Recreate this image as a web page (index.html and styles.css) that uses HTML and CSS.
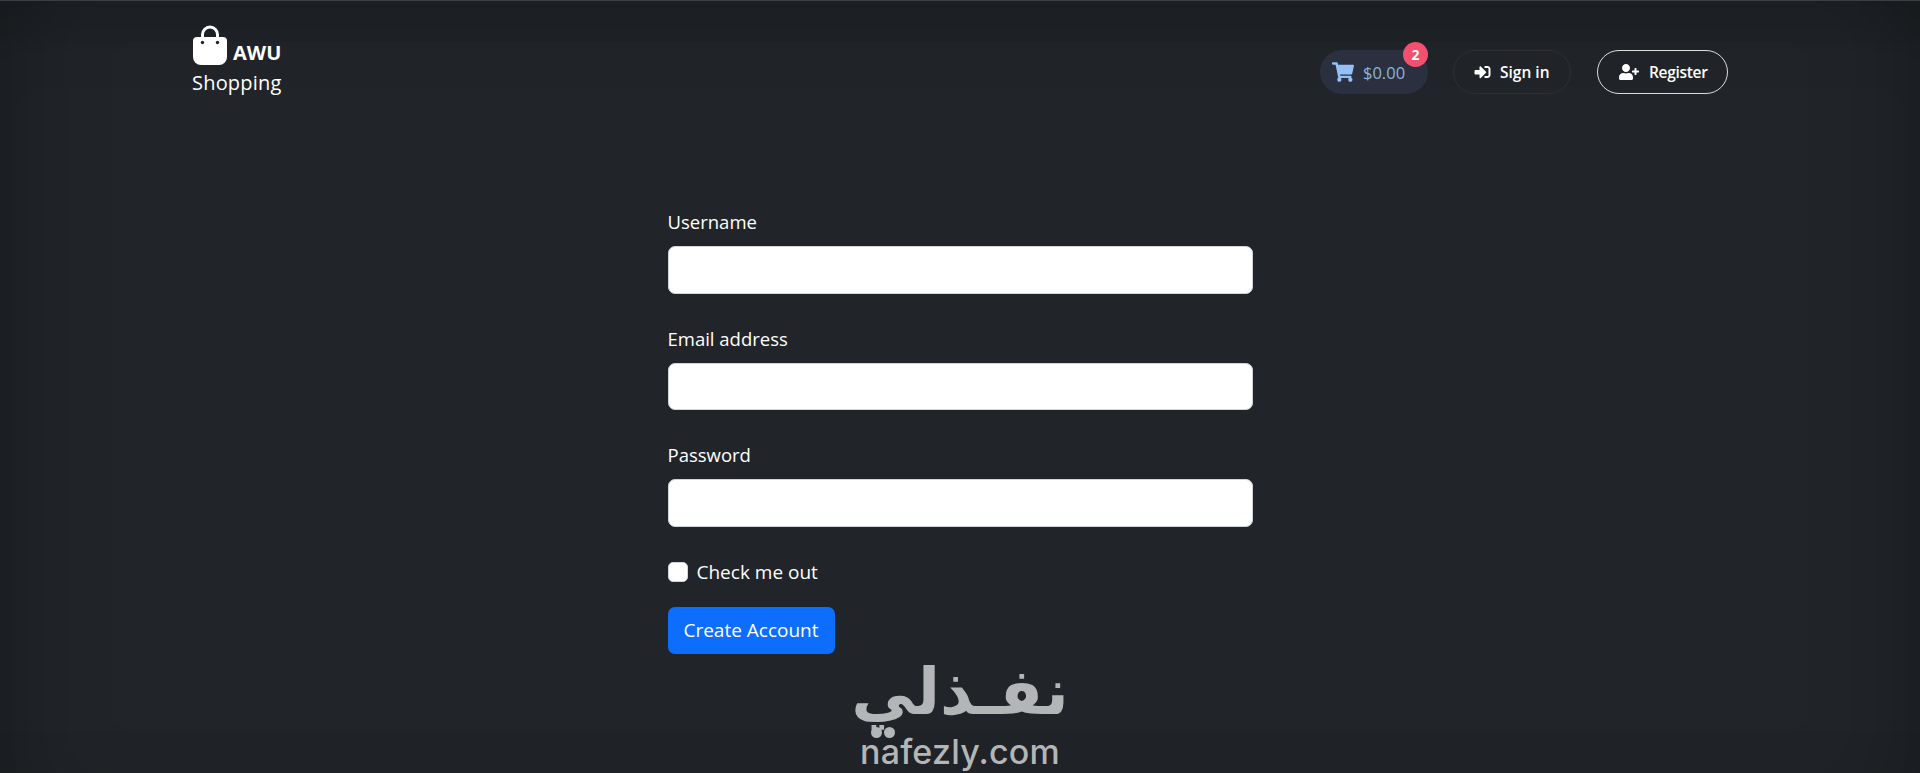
FILE: index.html
```html
<!DOCTYPE html>
<html lang="en">
<head>
    <meta charset="UTF-8">
    <meta name="viewport" content="width=device-width, initial-scale=1.0">
    <title>AWU Shopping</title>
    <link rel="stylesheet" href="styles.css">
</head>
<body>

    <header class="navbar">
        <a class="brand" href="#">
            <span class="brand-top">
                <svg class="brand-bag" viewBox="0 0 36 40">
                    <path d="M10.5 13V9.5a7.5 7.5 0 0 1 15 0V13" fill="none" stroke="#fff" stroke-width="3"/>
                    <path d="M5 12h26a4 4 0 0 1 4 4v16a8 8 0 0 1-8 8H9a8 8 0 0 1-8-8V16a4 4 0 0 1 4-4z" fill="#fff"/>
                    <circle cx="10.5" cy="17.5" r="1.7" fill="#212529"/>
                    <circle cx="25.5" cy="17.5" r="1.7" fill="#212529"/>
                </svg>
                <b>AWU</b>
            </span>
            <span class="brand-sub">Shopping</span>
        </a>

        <nav class="nav-actions">
            <a class="pill cart" href="#">
                <svg class="cart-icon" viewBox="0 0 576 512"><path d="M528.12 301.319l47.273-208C578.806 78.301 567.391 64 551.99 64H159.208l-9.166-44.81C147.758 8.021 137.93 0 126.529 0H24C10.745 0 0 10.745 0 24v16c0 13.255 10.745 24 24 24h69.883l70.248 343.435C147.325 417.1 136 435.222 136 456c0 30.928 25.072 56 56 56s56-25.072 56-56c0-15.674-6.447-29.835-16.824-40h209.647C430.447 426.165 424 440.326 424 456c0 30.928 25.072 56 56 56s56-25.072 56-56c0-22.172-12.888-41.332-31.579-50.405l5.517-24.276c3.413-15.018-8.002-29.319-23.403-29.319H218.117l-6.545-32h293.145c11.206 0 20.92-7.754 23.403-18.681z"/></svg>
                <span class="cart-total">$0.00</span>
                <span class="badge">2</span>
            </a>
            <a class="pill signin" href="#">
                <svg class="nav-icon" viewBox="0 0 512 512"><path d="M416 448h-84c-6.6 0-12-5.4-12-12v-40c0-6.6 5.4-12 12-12h84c17.7 0 32-14.3 32-32V160c0-17.7-14.3-32-32-32h-84c-6.6 0-12-5.4-12-12V76c0-6.6 5.4-12 12-12h84c53 0 96 43 96 96v192c0 53-43 96-96 96zm-47-201L201 79c-15-15-41-4.5-41 17v96H24c-13.3 0-24 10.7-24 24v96c0 13.3 10.7 24 24 24h136v96c0 21.5 26 32 41 17l168-168c9.3-9.4 9.3-24.6 0-34z"/></svg>
                Sign in
            </a>
            <a class="pill register" href="#">
                <svg class="nav-icon user-icon" viewBox="0 0 640 512"><path d="M624 208h-64v-64c0-8.8-7.2-16-16-16h-32c-8.8 0-16 7.2-16 16v64h-64c-8.8 0-16 7.2-16 16v32c0 8.8 7.2 16 16 16h64v64c0 8.8 7.2 16 16 16h32c8.8 0 16-7.2 16-16v-64h64c8.8 0 16-7.2 16-16v-32c0-8.8-7.2-16-16-16zm-400 48c70.7 0 128-57.3 128-128S294.7 0 224 0 96 57.3 96 128s57.3 128 128 128zm89.6 32h-16.7c-22.2 10.2-46.9 16-72.9 16s-50.6-5.8-72.9-16h-16.7C60.2 288 0 348.2 0 422.4V464c0 26.5 21.5 48 48 48h352c26.5 0 48-21.5 48-48v-41.6c0-74.2-60.2-134.4-134.4-134.4z"/></svg>
                Register
            </a>
        </nav>
    </header>

    <main class="content">
        <form class="signup-form">
            <div class="field">
                <label for="username">Username</label>
                <input type="text" id="username">
            </div>
            <div class="field">
                <label for="email">Email address</label>
                <input type="email" id="email">
            </div>
            <div class="field">
                <label for="password">Password</label>
                <input type="password" id="password">
            </div>
            <div class="check-row">
                <input type="checkbox" id="check">
                <label for="check">Check me out</label>
            </div>
            <button type="button" class="btn-primary">Create Account</button>
        </form>

        <!-- site watermark -->
        <div class="watermark">
            <div class="watermark-ar" dir="rtl" lang="ar">نفـذلي</div>
            <div class="watermark-en">nafezly.com</div>
        </div>
    </main>

</body>
</html>
```

FILE: styles.css
```css
* {
    box-sizing: border-box;
}
html, body {
    height: 100%;
}
body {
    margin: 0;
    overflow: hidden;
    font-family: 'Open Sans', 'Noto Sans', sans-serif;
    font-size: 20px;
    color: #fff;
    background-color: #212529;
    border-top: 1px solid #3b3e42;
    box-shadow: inset 70px 0 90px -50px rgba(0, 0, 0, 0.22), inset -70px 0 90px -50px rgba(0, 0, 0, 0.22), inset 0 70px 70px -50px rgba(0, 0, 0, 0.15);
}
a {
    color: inherit;
    text-decoration: none;
}

/* Navbar */
.navbar {
    display: flex;
    justify-content: space-between;
    align-items: flex-start;
    padding: 24px 192px 0 192px;
}
.brand {
    display: flex;
    flex-direction: column;
}
.brand-top {
    display: flex;
    align-items: flex-end;
    gap: 5px;
}
.brand-top b {
    font-size: 20px;
    line-height: 24px;
    font-weight: 700;
}
.brand-bag {
    width: 36px;
    height: 40px;
    display: block;
}
.brand-sub {
    font-size: 20px;
    line-height: 30px;
    margin-top: 3px;
    letter-spacing: 0.2px;
}
.nav-actions {
    display: flex;
    align-items: center;
    gap: 25px;
    margin-top: 25px;
}
.pill {
    position: relative;
    display: flex;
    align-items: center;
    height: 44px;
    border-radius: 22px;
    border: 1px solid transparent;
    font-size: 15.5px;
    font-weight: 600;
}
.cart {
    width: 108px;
    padding-left: 11px;
    gap: 9px;
    background: #2b3040;
    color: #8ab4d8;
}
.cart-total {
    font-size: 16.5px;
    font-weight: 400;
}
.cart-icon {
    width: 22px;
    height: 20px;
    fill: #93c0f7;
}
.badge {
    position: absolute;
    top: -9px;
    right: -1px;
    width: 25px;
    height: 25px;
    border-radius: 50%;
    background: #f3506f;
    color: #fff;
    font-size: 14px;
    font-weight: 700;
    display: flex;
    align-items: center;
    justify-content: center;
}
.signin {
    width: 118px;
    padding-left: 20px;
    gap: 9px;
    border-color: #2c3034;
}
.register {
    width: 131px;
    margin-left: 1px;
    padding-left: 20px;
    gap: 9px;
    border-color: #dcdcdc;
    letter-spacing: -0.3px;
}
.nav-icon {
    width: 17px;
    height: 16px;
    fill: #fff;
}
.user-icon {
    width: 22px;
}

/* Form */
.content {
    display: flex;
    flex-direction: column;
    align-items: center;
}
.signup-form {
    width: 585px;
    margin: 109px 0 0 0;
}
.field {
    margin-bottom: 30px;
}
.field label {
    display: block;
    font-size: 18.5px;
    line-height: 30px;
    margin-bottom: 9px;
}
.field input {
    display: block;
    width: 100%;
    height: 47.5px;
    border: 1px solid #ced4da;
    border-radius: 7px;
    background: #fff;
}
.check-row {
    display: flex;
    align-items: center;
    gap: 9px;
    height: 30px;
    margin-bottom: 20px;
    font-size: 19px;
}
.check-row input {
    appearance: none;
    width: 20px;
    height: 20px;
    margin: 0;
    background: #fff;
    border: 1px solid #ced4da;
    border-radius: 5px;
}
.btn-primary {
    display: block;
    height: 47px;
    width: 167px;
    border: none;
    border-radius: 7px;
    background-color: #0d6efd;
    color: #fff;
    font-family: inherit;
    font-size: 19px;
}

/* Watermark */
.watermark {
    margin-top: -3px;
    color: #b3b5b6;
    text-align: center;
}
.watermark-ar {
    font-family: 'DejaVu Sans', sans-serif;
    font-size: 64px;
    font-weight: 700;
    line-height: 83px;
}
.watermark-en {
    position: relative;
    font-family: 'Inter', sans-serif;
    font-size: 34px;
    font-weight: 500;
    line-height: 36px;
    letter-spacing: 0.2px;
}
/* the two dots above the "a" in the logo */
.watermark-en::before {
    content: "";
    position: absolute;
    left: 20px;
    top: -7px;
    width: 11px;
    height: 11px;
    border-radius: 50%;
    background: #b3b5b6;
    box-shadow: 13px 0 0 #b3b5b6;
}
```
